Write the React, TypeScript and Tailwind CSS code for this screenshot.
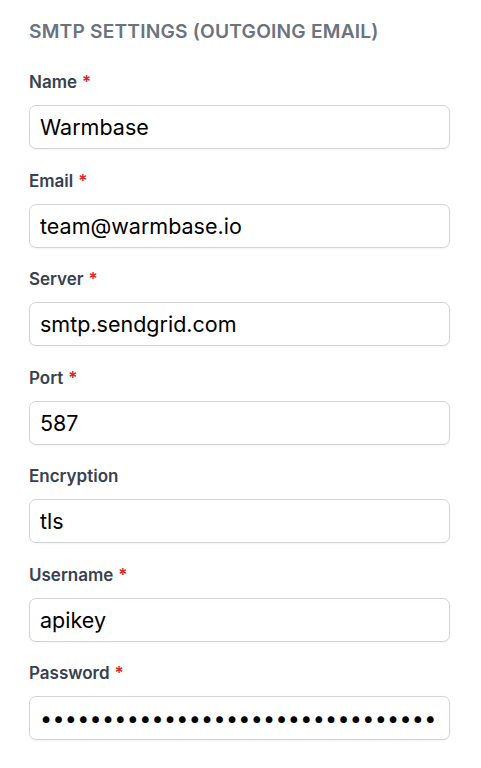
import React from "react";

const fields: { label: string; value: string; required: boolean; type?: string }[] = [
  { label: "Name", value: "Warmbase", required: true },
  { label: "Email", value: "team@warmbase.io", required: true },
  { label: "Server", value: "smtp.sendgrid.com", required: true },
  { label: "Port", value: "587", required: true },
  { label: "Encryption", value: "tls", required: false },
  { label: "Username", value: "apikey", required: true },
  { label: "Password", value: "SG.abcdefghijklmnopqrstuvwxyz1234567890abcd", required: true, type: "password" },
];

export default function App() {
  return (
    <div className="min-h-[768px] bg-white pl-[29px] pr-[31px] pt-[19px]" style={{ fontFamily: "Inter, 'Noto Sans', sans-serif" }}>
      <h2 className="text-[19.2px] font-semibold leading-[24px] tracking-[0.01em] text-[#6b7280]">SMTP SETTINGS (OUTGOING EMAIL)</h2>
      <div className="mt-[28px] flex flex-col gap-[20.5px]">
        {fields.map((f) => (
          <div key={f.label} className="flex flex-col">
            <label className="text-[17px] font-semibold leading-[22px] text-[#374151]">
              {f.label}
              {f.required && <span className="ml-[5px] text-[#dc2626]">*</span>}
            </label>
            <input
              readOnly
              type={f.type ?? "text"}
              value={f.value}
              className={
                f.type === "password"
                  ? "mt-[12px] h-[44px] w-full rounded-[7px] border border-[#d1d5db] bg-white px-[10px] text-[21.5px] tracking-[0.3px] text-black outline-none shadow-[0_1px_2px_rgba(0,0,0,0.05)]"
                  : "mt-[12px] h-[44px] w-full rounded-[7px] border border-[#d1d5db] bg-white px-[10px] text-[21.5px] text-black outline-none shadow-[0_1px_2px_rgba(0,0,0,0.05)]"
              }
              style={{ fontFamily: "Inter, 'Noto Sans', sans-serif" }}
            />
          </div>
        ))}
      </div>
    </div>
  );
}
